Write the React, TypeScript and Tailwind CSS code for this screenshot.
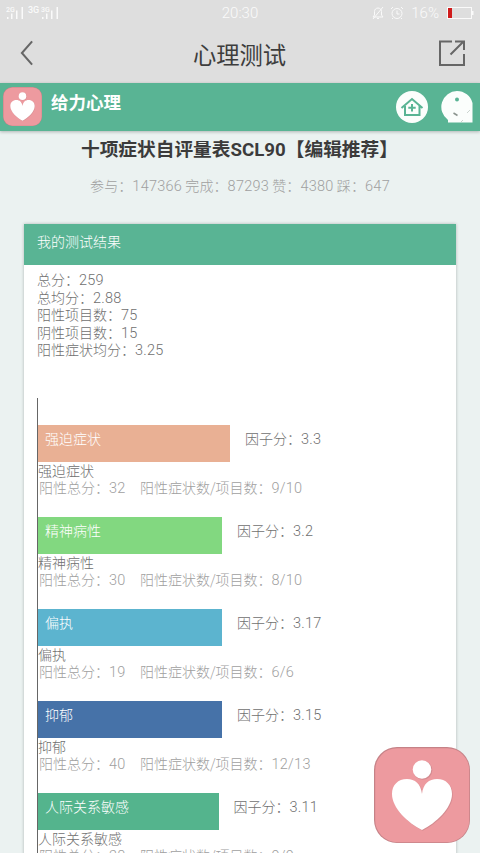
import React from 'react';

interface Factor {
  name: string;
  score: string;
  total: string;
  count: string;
  width: number;
  color: string;
}

const factors: Factor[] = [
  { name: '强迫症状', score: '3.3', total: '32', count: '9/10', width: 192, color: 'bg-[#e9b094]' },
  { name: '精神病性', score: '3.2', total: '30', count: '8/10', width: 184, color: 'bg-[#82d880]' },
  { name: '偏执', score: '3.17', total: '19', count: '6/6', width: 184, color: 'bg-[#5cb4cf]' },
  { name: '抑郁', score: '3.15', total: '40', count: '12/13', width: 184, color: 'bg-[#4672a8]' },
  { name: '人际关系敏感', score: '3.11', total: '28', count: '9/9', width: 180.5, color: 'bg-[#54b48d]' },
];

const summary = [
  { label: '总分：', value: '259' },
  { label: '总均分：', value: '2.88' },
  { label: '阳性项目数：', value: '75' },
  { label: '阴性项目数：', value: '15' },
  { label: '阳性症状均分：', value: '3.25' },
];

// Numbers are set a little wider than the Chinese text around them
const Num = ({ children }: { children: React.ReactNode }) => (
  <span className="font-['Roboto'] font-light text-[14.5px] tracking-[0.25px]">{children}</span>
);

const HeartLogo = ({ className }: { className: string }) => (
  <svg className={className} viewBox="0 0 96 96">
    <rect width="96" height="96" rx="23" fill="#c58287" />
    <rect x="1.200" y="1.200" width="94" height="94" rx="22" fill="#ed9a9f" />
    <g fill="#c9858a" opacity="0.7" transform="translate(0.8 0.8)">
      <circle cx="48" cy="22.500" r="9.500" />
      <path d="M48 47C47 37 41 32 33 32C24 32 18 38 18 47C18 61 34 76 48 83C62 76 78 61 78 47C78 38 72 32 63 32C55 32 49 37 48 47Z" />
    </g>
    <g fill="#fff">
      <circle cx="48" cy="22.500" r="9.300" />
      <path d="M48 47C47 37 41 32 33 32C24 32 18 38 18 47C18 61 34 76 48 83C62 76 78 61 78 47C78 38 72 32 63 32C55 32 49 37 48 47Z" />
    </g>
  </svg>
);

const Signal = ({ label }: { label: string }) => (
  <svg className="h-[14px] w-[18px]" viewBox="0 0 18 14" fill="#fafafa">
    <text x="0" y="5.500" fontSize="7" fontWeight="500" fontFamily="Roboto, sans-serif">{label}</text>
    <rect x="1" y="11" width="1.500" height="2" />
    <rect x="5" y="7.500" width="1.500" height="5.500" />
    <rect x="10" y="4.500" width="1.500" height="8.500" />
    <rect x="15.500" y="1" width="1.500" height="12" />
  </svg>
);

const StatusBar = () => (
  <div className="grid h-[26px] grid-cols-3 items-center px-1.5 text-[#fafafa]">
    <div className="flex items-center">
      <Signal label="2G" />
      <span className="-mt-1.5 ml-1 w-[13px] font-['Roboto'] text-[9px] font-medium leading-none">3G</span>
      <Signal label="3G" />
    </div>
    <div className="text-center font-['Roboto'] text-[15px] font-light">20:30</div>
    <div className="flex items-center justify-end">
      <svg className="mr-[5px] h-[14px] w-[14px]" viewBox="0 0 14 14" fill="none" stroke="#fafafa">
        <path d="M2 11H12L10.500 9V5.500C10.500 3.500 9 2 7 2S3.500 3.500 3.500 5.500V9L2 11M6 12.500H8M12 1L2 13" />
      </svg>
      <svg className="mr-[7px] h-[14px] w-[14px]" viewBox="0 0 14 14" fill="none" stroke="#fafafa">
        <circle cx="7" cy="7.500" r="5" />
        <path d="M7 4.500V8H9.500M1 3L3 1M13 3L11 1M3 12L2 13M11 12L12 13" />
      </svg>
      <span className="mr-2 font-['Roboto'] text-[15px] font-light">16%</span>
      <svg className="h-[12px] w-[27px]" viewBox="0 0 27 12">
        <rect x="0.500" y="0.500" width="24" height="11" fill="none" stroke="#fafafa" />
        <rect x="1" y="1" width="4" height="10" fill="#d01c1c" />
        <rect x="25" y="4" width="1.500" height="4" fill="#fafafa" />
      </svg>
    </div>
  </div>
);

const TitleBar = () => (
  <div className="flex h-[57px] items-center justify-between pl-5 pr-[14px]">
    <svg className="-mt-1 h-[26px] w-[14px]" viewBox="0 0 14 28" fill="none" stroke="#666" strokeWidth="2.200">
      <path d="M12.500 1.500L1.500 14L12.500 26.500" />
    </svg>
    <h1 className="ml-[7px] text-[23.300px] font-normal text-[#3d3d3d]">心理测试</h1>
    <svg className="-mt-1 h-[28px] w-[28px]" viewBox="0 0 28 28" fill="none" stroke="#666" strokeWidth="2">
      <path d="M14 2.500H2V26H26V15M12.500 15.500L25 3M17 2.500H26V11" />
    </svg>
  </div>
);

const SiteHeader = () => (
  <header className="flex h-[48px] items-start bg-[#59b494] pl-[3px] pr-[7px] shadow-[0_1px_3px_rgba(0,0,0,0.25)]">
    <HeartLogo className="mt-1 h-[39px] w-[39px]" />
    <span className="ml-[9px] mt-1.5 flex-1 text-[17.500px] font-bold leading-[26px] text-white">给力心理</span>
    <svg className="mr-[13px] mt-[8px] h-[32px] w-[32px]" viewBox="0 0 32 32" fill="none" stroke="#59b494" strokeWidth="2">
      <circle cx="16" cy="16" r="16" fill="#fbfefc" stroke="none" />
      <path d="M5.500 17L16 8L26.500 17M9 15V24H23.500V15M16 13V20.500M12.300 16.700H19.700" />
    </svg>
    <svg className="mt-[8px] h-[32px] w-[32px]" viewBox="0 0 32 32">
      <path d="M16 0A16 16 0 0 1 31.500 12V31.500H7V29A16 16 0 0 1 16 0Z" fill="#fbfefc" />
      <circle cx="16" cy="8.500" r="2" fill="#59b494" />
      <path d="M12.500 22L16.500 24.500" stroke="#8a948e" strokeWidth="1.500" />
      <path d="M20 31L22 29M26 22L29 19" stroke="#ccd5d0" />
    </svg>
  </header>
);

const FactorRow = ({ factor }: { factor: Factor }) => (
  <div className="mb-5 h-[72px] leading-[17.500px]">
    <div className="flex h-[37px]">
      <div className={`${factor.color} pl-[7px] pt-[5px] text-white`} style={{ width: factor.width }}>
        {factor.name}
      </div>
      <div className="pl-[15px] pt-[5px] text-[#707070]">因子分：<Num>{factor.score}</Num></div>
    </div>
    <div className="text-[#707070]">{factor.name}</div>
    <div className="flex pl-px text-[#a0a0a0]">
      <span className="w-[101px]">阳性总分：<Num>{factor.total}</Num></span>
      <span>阳性症状数/项目数：<Num>{factor.count}</Num></span>
    </div>
  </div>
);

const App: React.FC = () => {
  return (
    <div className="relative h-[853px] w-[480px] overflow-hidden bg-[#ebf2f1] font-['Noto_Sans_CJK_SC',sans-serif] text-[14px] font-light">
      <div className="bg-[#dedede]">
        <StatusBar />
        <TitleBar />
      </div>
      <SiteHeader />

      <div className="h-[93px]">
        <h2 className="whitespace-nowrap pl-[81px] pt-1 text-[18.700px] font-bold leading-[26px] text-[#3b3b3b]">
          十项症状自评量表<span className="font-['Roboto']">SCL90</span>【编辑推荐】
        </h2>
        <p className="mt-3 text-center leading-[20px] tracking-[0.1px] text-[#a0a0a0]">
          参与：<Num>147366</Num> 完成：<Num>87293</Num> 赞：<Num>4380</Num> 踩：<Num>647</Num>
        </p>
      </div>

      <section className="mx-6 h-[700px] bg-white shadow-[0_0_3px_rgba(0,0,0,0.25)]">
        <div className="h-[41px] bg-[#59b494] pl-[13px] pt-[7px] leading-5 text-white">我的测试结果</div>
        <div className="pl-[13px] pt-[6px] leading-[17.500px] text-[#707070]">
          {summary.map((item) => (
            <div key={item.label} className="h-[17.500px]">
              {item.label}<Num>{item.value}</Num>
            </div>
          ))}
        </div>
        <div className="ml-[13px] mt-[39px] h-[500px] border-l border-[#666] pt-[27px]">
          {factors.map((factor) => (
            <FactorRow key={factor.name} factor={factor} />
          ))}
        </div>
      </section>

      {/* Floating shortcut */}
      <HeartLogo className="absolute left-[374px] top-[747px] h-[96px] w-[96px]" />
    </div>
  );
};

export default App;
